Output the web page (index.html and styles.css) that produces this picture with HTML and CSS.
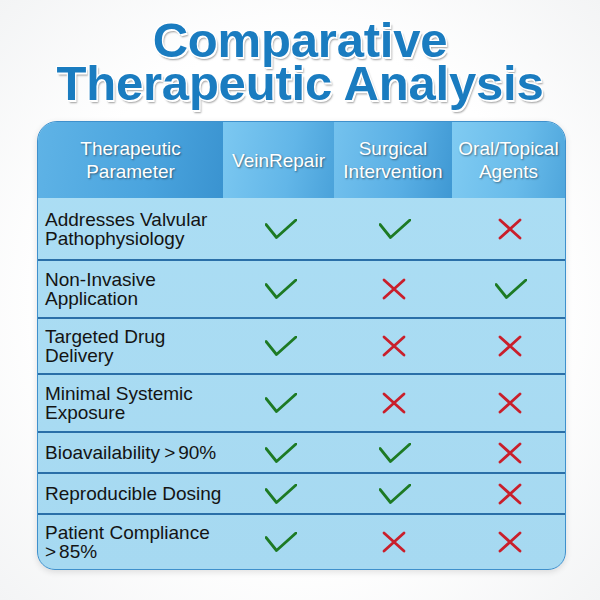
FILE: index.html
```html
<!DOCTYPE html>
<html>
<head>
<meta charset="utf-8">
<link rel="stylesheet" href="styles.css">
</head>
<body>
<div class="page">
  <h1 class="title"><span class="tline">Comparative</span><span class="tline">Therapeutic Analysis</span></h1>
  <div class="table">
    <div class="hcell h1">Therapeutic<br>Parameter</div>
    <div class="hcell h2">VeinRepair</div>
    <div class="hcell h3">Surgical<br>Intervention</div>
    <div class="hcell h4">Oral/Topical<br>Agents</div>

    <div class="cell label first"><p class="txt">Addresses Valvular<br>Pathophysiology</p></div>
    <div class="cell icon first"><svg class="chk" viewBox="0 0 32 20"><path d="M1 5.5 L11.5 18.5 L31 1"/></svg></div>
    <div class="cell icon first"><svg class="chk" viewBox="0 0 32 20"><path d="M1 5.5 L11.5 18.5 L31 1"/></svg></div>
    <div class="cell icon first"><svg class="x" viewBox="0 0 24 22"><path d="M2 2 L22 20 M22 2 L2 20"/></svg></div>

    <div class="cell label"><p class="txt">Non-Invasive<br>Application</p></div>
    <div class="cell icon"><svg class="chk" viewBox="0 0 32 20"><path d="M1 5.5 L11.5 18.5 L31 1"/></svg></div>
    <div class="cell icon"><svg class="x" viewBox="0 0 24 22"><path d="M2 2 L22 20 M22 2 L2 20"/></svg></div>
    <div class="cell icon"><svg class="chk" viewBox="0 0 32 20"><path d="M1 5.5 L11.5 18.5 L31 1"/></svg></div>

    <div class="cell label"><p class="txt">Targeted Drug<br>Delivery</p></div>
    <div class="cell icon"><svg class="chk" viewBox="0 0 32 20"><path d="M1 5.5 L11.5 18.5 L31 1"/></svg></div>
    <div class="cell icon"><svg class="x" viewBox="0 0 24 22"><path d="M2 2 L22 20 M22 2 L2 20"/></svg></div>
    <div class="cell icon"><svg class="x" viewBox="0 0 24 22"><path d="M2 2 L22 20 M22 2 L2 20"/></svg></div>

    <div class="cell label"><p class="txt">Minimal Systemic<br>Exposure</p></div>
    <div class="cell icon"><svg class="chk" viewBox="0 0 32 20"><path d="M1 5.5 L11.5 18.5 L31 1"/></svg></div>
    <div class="cell icon"><svg class="x" viewBox="0 0 24 22"><path d="M2 2 L22 20 M22 2 L2 20"/></svg></div>
    <div class="cell icon"><svg class="x" viewBox="0 0 24 22"><path d="M2 2 L22 20 M22 2 L2 20"/></svg></div>

    <div class="cell label"><p class="txt">Bioavailability<span class="gt">&gt;</span>90%</p></div>
    <div class="cell icon"><svg class="chk" viewBox="0 0 32 20"><path d="M1 5.5 L11.5 18.5 L31 1"/></svg></div>
    <div class="cell icon"><svg class="chk" viewBox="0 0 32 20"><path d="M1 5.5 L11.5 18.5 L31 1"/></svg></div>
    <div class="cell icon"><svg class="x" viewBox="0 0 24 22"><path d="M2 2 L22 20 M22 2 L2 20"/></svg></div>

    <div class="cell label"><p class="txt">Reproducible Dosing</p></div>
    <div class="cell icon"><svg class="chk" viewBox="0 0 32 20"><path d="M1 5.5 L11.5 18.5 L31 1"/></svg></div>
    <div class="cell icon"><svg class="chk" viewBox="0 0 32 20"><path d="M1 5.5 L11.5 18.5 L31 1"/></svg></div>
    <div class="cell icon"><svg class="x" viewBox="0 0 24 22"><path d="M2 2 L22 20 M22 2 L2 20"/></svg></div>

    <div class="cell label"><p class="txt">Patient Compliance<br><span class="gt lead">&gt;</span>85%</p></div>
    <div class="cell icon"><svg class="chk" viewBox="0 0 32 20"><path d="M1 5.5 L11.5 18.5 L31 1"/></svg></div>
    <div class="cell icon"><svg class="x" viewBox="0 0 24 22"><path d="M2 2 L22 20 M22 2 L2 20"/></svg></div>
    <div class="cell icon"><svg class="x" viewBox="0 0 24 22"><path d="M2 2 L22 20 M22 2 L2 20"/></svg></div>
  </div>
</div>
</body>
</html>
```
FILE: styles.css
```css
html, body {
  margin: 0;
  padding: 0;
  background: #ffffff;
}
.page {
  width: 600px;
  height: 600px;
  box-sizing: border-box;
  padding-top: 19px;
  font-family: "Liberation Sans", Arial, sans-serif;
  background: radial-gradient(ellipse at center, #ffffff 60%, #f3f4f5 100%);
}
.title {
  margin: 0;
  text-align: center;
  font-family: "Liberation Sans", Arial, sans-serif;
  font-weight: bold;
  font-size: 49px;
  line-height: 43px;
  color: #1a7cc0;
  letter-spacing: -0.2px;
  text-shadow:
    -1px -1px 0 #fff, 1px -1px 0 #fff, -1px 1px 0 #fff, 1.5px 1.5px 0 #fff,
    2px 3px 2px rgba(0, 0, 0, 0.38);
}
.tline {
  display: block;
  height: 43px;
}
.table {
  margin: 16px 0 0 37px;
  width: 529px;
  box-sizing: border-box;
  display: grid;
  grid-template-columns: 185px 111px 118px 113px;
  grid-template-rows: 76px 61px 58px 56px 58px 41px 41px 56px;
  border: 1px solid #3f90cc;
  border-radius: 20px 20px 18px 18px;
  overflow: hidden;
  background: linear-gradient(180deg, #acdef4 0%, #a6d9f1 100%);
  box-shadow: 0 2px 6px rgba(0, 0, 0, 0.12);
}
.hcell {
  display: flex;
  align-items: center;
  justify-content: center;
  text-align: center;
  color: #ffffff;
  font-size: 19px;
  line-height: 23px;
  text-shadow: 1px 1px 2px rgba(0, 0, 0, 0.45);
  white-space: nowrap;
}
.h1 { background: linear-gradient(100deg, #5fb3e6 0%, #4aa4de 60%, #3a93d0 100%); }
.h2 { background: linear-gradient(100deg, #7cc8f1 0%, #62b6e8 60%, #4aa2da 100%); }
.h3 { background: linear-gradient(100deg, #74c2ee 0%, #58aee4 60%, #3f98d3 100%); }
.h4 { background: linear-gradient(100deg, #80cbf2 0%, #68bbea 60%, #4fa6dc 100%); }
.cell {
  border-top: 2px solid #2a6fa8;
  display: flex;
  align-items: center;
}
.cell.first {
  border-top: none;
}
.label {
  padding-left: 7px;
}
.txt {
  margin: 0;
  font-size: 19px;
  line-height: 19px;
  color: #141414;
  white-space: nowrap;
}
.gt {
  margin: 0 3px 0 4px;
}
.gt.lead {
  margin-left: 0;
}
.icon {
  justify-content: center;
}
.chk {
  width: 32px;
  height: 20px;
  margin-left: 4px;
  fill: none;
  stroke: #1d7a24;
  stroke-width: 2.8;
  stroke-linecap: round;
  stroke-linejoin: round;
}
.x {
  width: 24px;
  height: 22px;
  margin-left: 2px;
  fill: none;
  stroke: #c91f2b;
  stroke-width: 2.8;
  stroke-linecap: round;
}
```
